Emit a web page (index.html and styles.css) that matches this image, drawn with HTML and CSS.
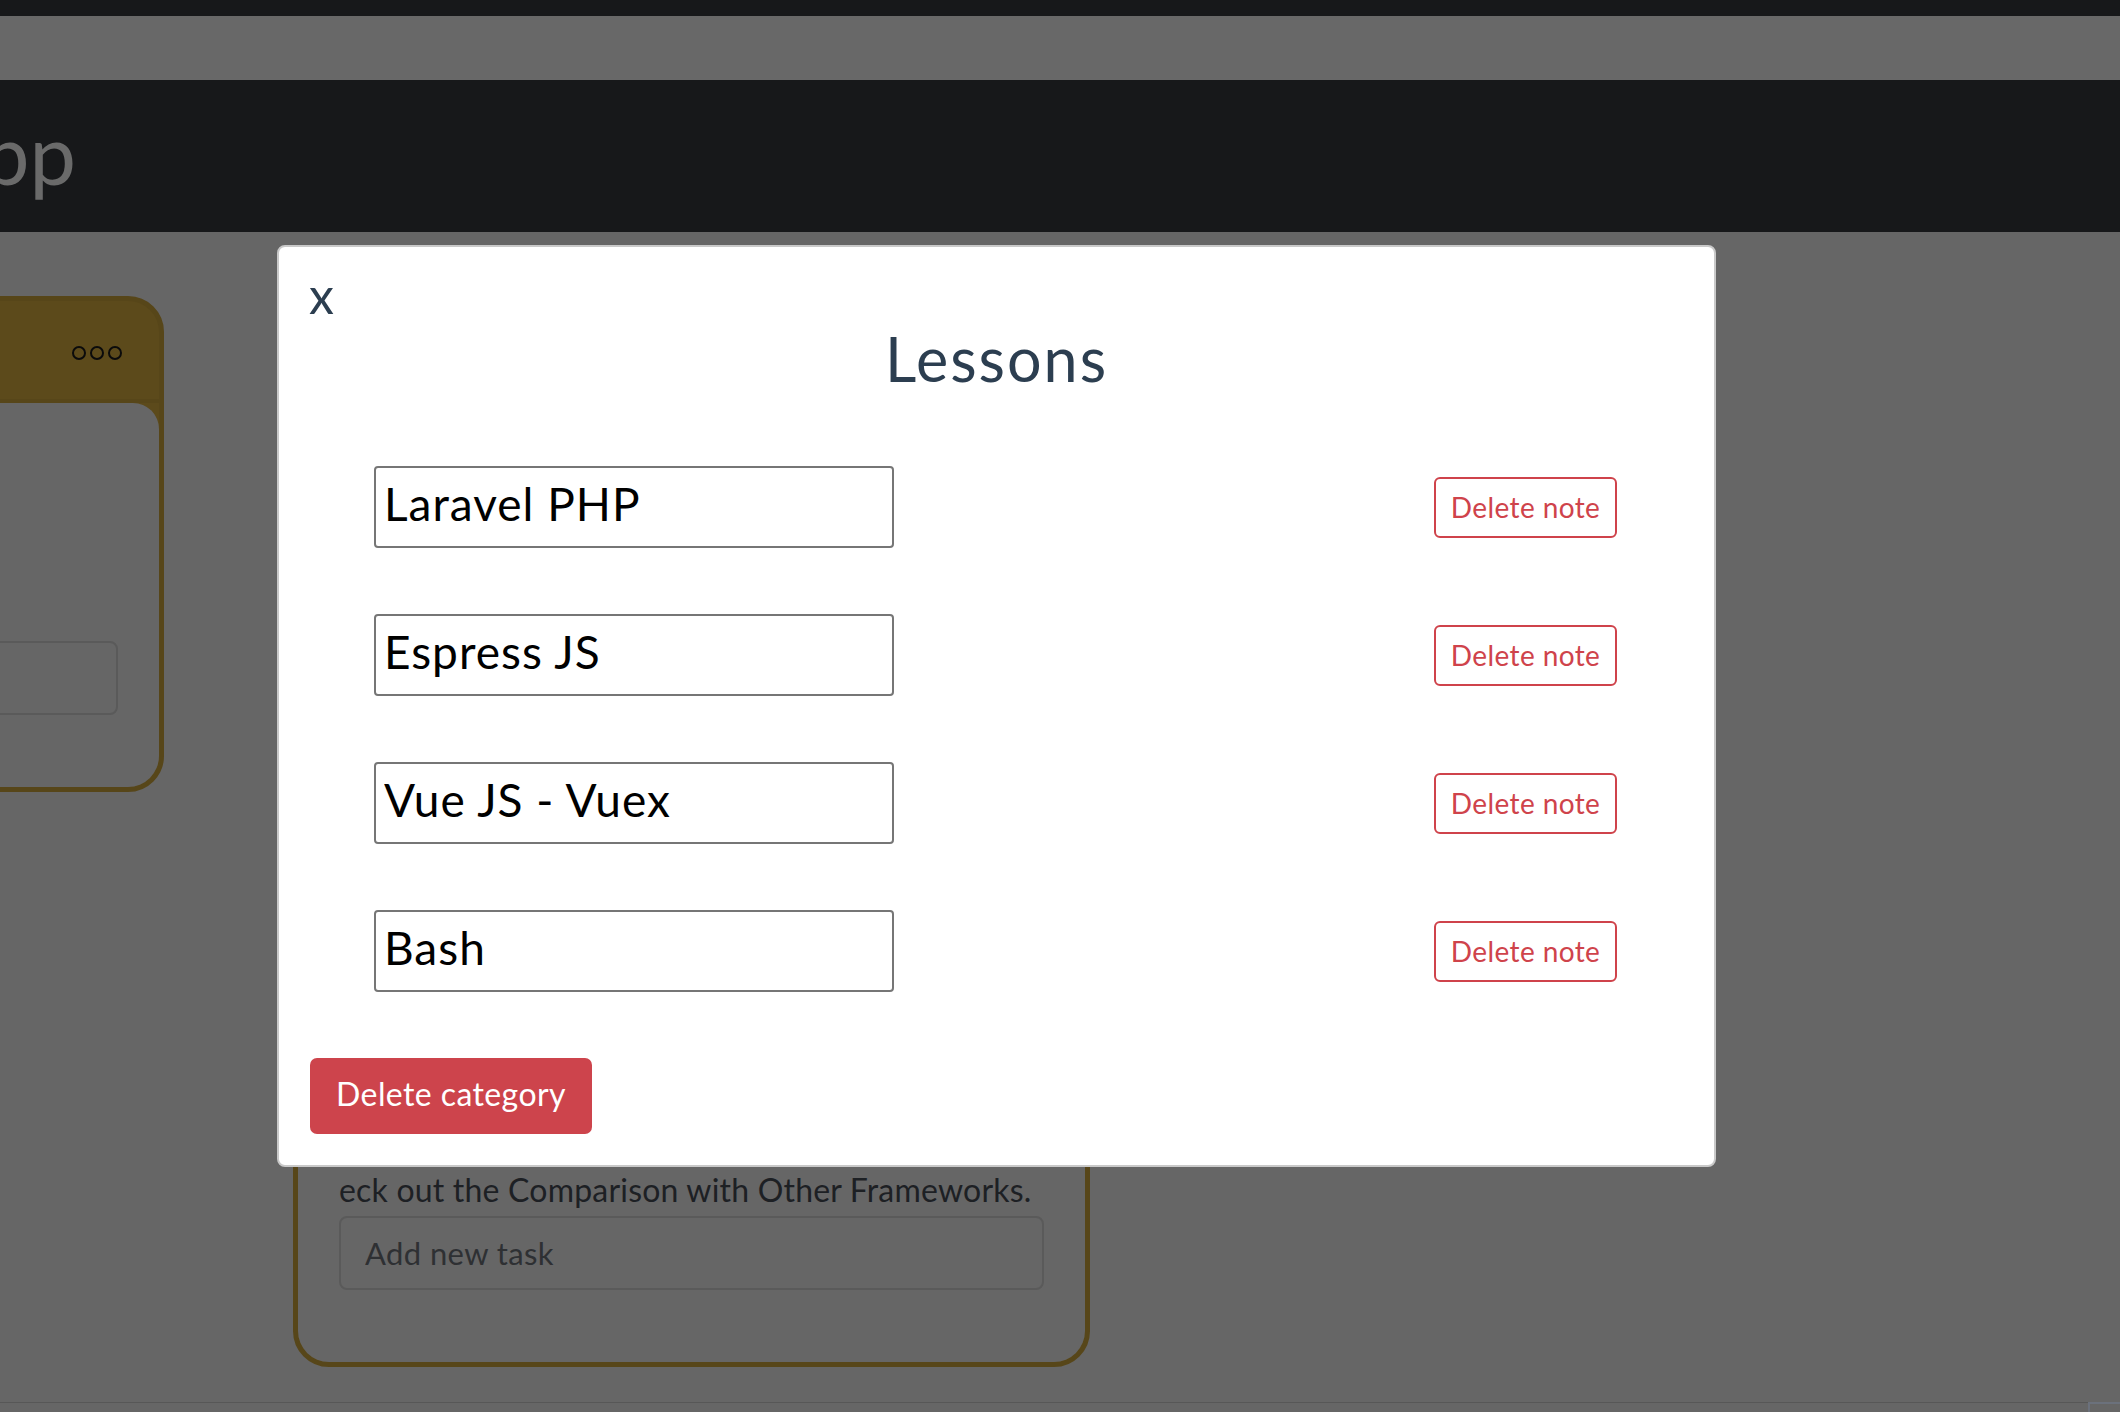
FILE: index.html
```html
<!DOCTYPE html>
<html lang="en">
<head>
<meta charset="utf-8">
<title>Todo App – Lessons</title>
<link rel="stylesheet" href="styles.css">
</head>
<body>
  <div class="topbar"></div>
  <div class="tabbar"></div>
  <header class="hero">
    <div class="brand-wrap">
      <h1 class="brand">Todo App</h1>
    </div>
  </header>

  <main class="board">
    <section class="card">
      <div class="card-head">
        <span class="card-title">Backend</span>
        <span class="dots"><i></i><i></i><i></i></span>
      </div>
      <div class="card-body">
        <div class="tasks tasks-short"></div>
        <input class="task-input" type="text" placeholder="Add new task">
      </div>
    </section>

    <section class="card">
      <div class="card-head">
        <span class="card-title">Frontend</span>
        <span class="dots"><i></i><i></i><i></i></span>
      </div>
      <div class="card-body">
        <div class="tasks tasks-long"></div>
        <p class="task-text">eck out the Comparison with Other Frameworks.</p>
        <input class="task-input" type="text" placeholder="Add new task">
      </div>
    </section>
  </main>

  <div class="hscroll"><span class="hscroll-corner"></span></div>

  <div class="modal" role="dialog" aria-labelledby="modal-title">
    <button class="close" type="button">x</button>
    <h2 class="modal-title" id="modal-title">Lessons</h2>
    <ul class="lessons">
      <li class="lesson">
        <input class="lesson-input" type="text" value="Laravel PHP">
        <button class="btn-outline" type="button">Delete note</button>
      </li>
      <li class="lesson">
        <input class="lesson-input" type="text" value="Espress JS">
        <button class="btn-outline" type="button">Delete note</button>
      </li>
      <li class="lesson">
        <input class="lesson-input" type="text" value="Vue JS - Vuex">
        <button class="btn-outline" type="button">Delete note</button>
      </li>
      <li class="lesson">
        <input class="lesson-input" type="text" value="Bash">
        <button class="btn-outline" type="button">Delete note</button>
      </li>
    </ul>
    <button class="btn-danger" type="button">Delete category</button>
  </div>
</body>
</html>
```

FILE: styles.css
```css
* {
  box-sizing: border-box;
}

html, body {
  margin: 0;
  padding: 0;
}

body {
  width: 2120px;
  height: 1412px;
  overflow: hidden;
  background: #666666;
  font-family: Lato, "Open Sans", sans-serif;
  color: #1d2024;
}

/* ---------- page behind the dialog (dimmed) ---------- */
.topbar {
  height: 16px;
  background: #17181a;
}

.tabbar {
  height: 64px;
  background: #686868;
}

.hero {
  display: flex;
  height: 152px;
  background: #17181a;
  overflow: hidden;
}

/* the page is scrolled horizontally: only the end of the title shows */
.brand-wrap {
  display: flex;
  justify-content: flex-end;
  flex: 0 0 76px;
  width: 76px;
}

.brand {
  flex: none;
  margin: 0;
  font-family: Lato, "Liberation Sans", sans-serif;
  font-weight: 400;
  font-size: 83px;
  line-height: 147px;
  color: #6a6a6a;
  white-space: nowrap;
}

.board {
  display: flex;
  align-items: flex-start;
  gap: 129px;
  margin-left: -633px;
  padding-top: 64px;
}

.card {
  flex: 0 0 797px;
  width: 797px;
  border: 5px solid #574619;
  border-radius: 36px;
  background: #5c4a1b;
  overflow: hidden;
}

.card-head {
  display: flex;
  justify-content: space-between;
  align-items: center;
  height: 102px;
  padding: 6px 37px 0 40px;
  border-bottom: 4px solid #574619;
}

.card-title {
  font-size: 34px;
  color: #1d1a10;
}

.dots {
  display: flex;
  gap: 4px;
}

.dots i {
  display: block;
  width: 14px;
  height: 14px;
  border: 2.5px solid #0b0b0b;
  border-radius: 50%;
}

.card-body {
  display: flex;
  flex-direction: column;
  padding: 0 41px 72px;
  background: #666666;
  border-radius: 0 26px 0 0;
}

.tasks-short {
  height: 238px;
}

.tasks-long {
  height: 763px;
}

.task-text {
  margin: 0 0 2px;
  font-size: 32px;
  line-height: 48px;
  letter-spacing: 0.2px;
  color: #1d2024;
  white-space: nowrap;
}

.task-input {
  height: 74px;
  padding: 0 24px;
  border: 2px solid #5a5a5a;
  border-radius: 8px;
  background: #666666;
  font-family: inherit;
  font-size: 31px;
  letter-spacing: 0.4px;
  color: #2e3033;
  outline: none;
}

.task-input::placeholder {
  color: #2e3033;
  opacity: 1;
}

.hscroll {
  position: fixed;
  left: 0;
  right: 0;
  bottom: 0;
  height: 10px;
  border-top: 1px solid #575757;
  background: #666666;
}

.hscroll-corner {
  position: absolute;
  right: 0;
  top: -1px;
  width: 32px;
  height: 11px;
  border-top: 2px solid #6b717c;
  border-left: 2px solid #6b717c;
}

/* ---------- dialog ---------- */
.modal {
  position: fixed;
  left: 277px;
  top: 245px;
  width: 1439px;
  height: 922px;
  padding: 23px 31px 31px;
  background: #ffffff;
  border: 2px solid #c9c9c9;
  border-radius: 8px;
  color: #2c3e50;
}

.close {
  display: block;
  padding: 0;
  margin: 0 0 0 -1px;
  border: 0;
  background: none;
  font-family: inherit;
  font-size: 50px;
  line-height: 50px;
  height: 50px;
  color: #2c3e50;
  cursor: pointer;
}

.modal-title {
  margin: 2px 0 0;
  text-align: center;
  font-weight: 400;
  font-size: 61px;
  line-height: 73px;
  letter-spacing: 2px;
  color: #2c3e50;
}

.lessons {
  list-style: none;
  margin: 71px 66px 0 64px;
  padding: 0;
  display: flex;
  flex-direction: column;
  gap: 66px;
}

.lesson {
  display: flex;
  justify-content: space-between;
  align-items: center;
  height: 82px;
}

.lesson-input {
  width: 520px;
  height: 82px;
  padding: 0 8px 8px;
  border: 2px solid #767676;
  border-radius: 4px;
  background: #fff;
  font-family: inherit;
  font-size: 46px;
  letter-spacing: 1px;
  color: #000;
  outline: none;
}

.btn-outline {
  width: 183px;
  height: 61px;
  padding: 0;
  border: 2px solid #cf434b;
  border-radius: 6px;
  background: #fff;
  font-family: inherit;
  font-size: 28px;
  letter-spacing: 0.4px;
  color: #cf434b;
  cursor: pointer;
}

.btn-danger {
  display: block;
  width: 282px;
  height: 76px;
  margin-top: 66px;
  padding: 0 0 5px;
  border: 0;
  border-radius: 7px;
  background: #cd444c;
  font-family: inherit;
  font-size: 32px;
  letter-spacing: 0.4px;
  color: #fff;
  cursor: pointer;
}
```
